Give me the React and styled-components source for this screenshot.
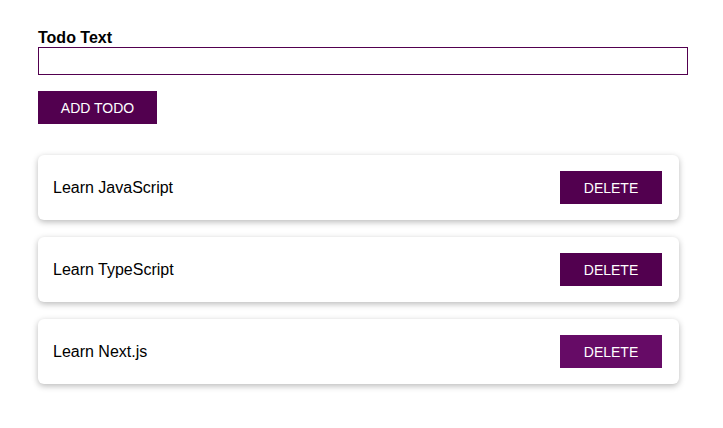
import React, { useState } from "react";
import styled, { createGlobalStyle } from "styled-components";

const GlobalStyle = createGlobalStyle`
  body {
    margin: 0;
    background: #ffffff;
    font-family: "Liberation Sans", Arial, sans-serif;
    color: #000;
  }
`;

const Page = styled.div`
  padding: 28px 0 40px 38px;
  width: 650px;
`;

const Form = styled.form`
  display: flex;
  flex-direction: column;
  align-items: flex-start;
`;

const Label = styled.label`
  font-size: 16px;
  font-weight: bold;
  line-height: 19px;
`;

const TextInput = styled.input`
  box-sizing: border-box;
  width: 650px;
  height: 28px;
  border: 1px solid #52004f;
  margin: 0;
  padding: 0 6px;
  font-size: 14px;
  font-family: inherit;
  outline: none;
`;

const Button = styled.button`
  border: 0;
  background: ${(p) => (p.$hover ? "#660b66" : "#52004f")};
  color: #fff;
  font-family: "Liberation Sans", Arial, sans-serif;
  font-size: 14px;
  height: 33px;
  width: ${(p) => p.$width}px;
  padding: 0;
  cursor: pointer;
`;

const AddButton = styled(Button)`
  margin-top: 16px;
`;

const List = styled.ul`
  list-style: none;
  margin: 31px 0 0;
  padding: 0;
  width: 641px;
  display: flex;
  flex-direction: column;
  gap: 17px;
`;

const Card = styled.li`
  height: 65px;
  box-sizing: border-box;
  padding: 0 17px 0 15px;
  border-radius: 6px;
  background: #fff;
  box-shadow: 0 2px 6px rgba(0, 0, 0, 0.28);
  display: flex;
  align-items: center;
  justify-content: space-between;
  font-size: 16px;
`;

export default function App() {
  const [text, setText] = useState("");
  const [todos, setTodos] = useState([
    "Learn JavaScript",
    "Learn TypeScript",
    "Learn Next.js",
  ]);

  const onSubmit = (e) => {
    e.preventDefault();
    if (!text.trim()) return;
    setTodos((prev) => [...prev, text]);
    setText("");
  };

  return (
    <>
      <GlobalStyle />
      <Page>
        <Form onSubmit={onSubmit}>
          <Label htmlFor="todo">Todo Text</Label>
          <TextInput
            id="todo"
            value={text}
            onChange={(e) => setText(e.target.value)}
          />
          <AddButton type="submit" $width={119}>
            ADD TODO
          </AddButton>
        </Form>
        <List>
          {todos.map((t, i) => (
            <Card key={i}>
              <span>{t}</span>
              <Button
                $width={102}
                $hover={i === 2}
                onClick={() => setTodos((prev) => prev.filter((_, j) => j !== i))}
              >
                DELETE
              </Button>
            </Card>
          ))}
        </List>
      </Page>
    </>
  );
}
